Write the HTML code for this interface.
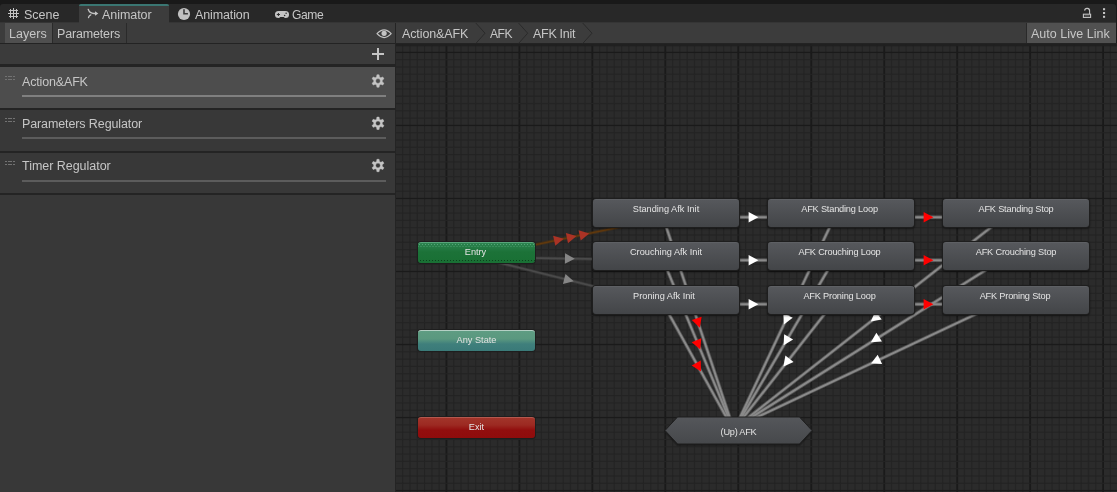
<!DOCTYPE html>
<html><head><meta charset="utf-8"><title>Animator</title>
<style>
html,body{margin:0;padding:0;background:#191919;}
body{width:1117px;height:492px;position:relative;overflow:hidden;font-family:"Liberation Sans",sans-serif;color:#d2d2d2;}
.abs{position:absolute}
.t{position:absolute;line-height:20px;white-space:nowrap;will-change:transform}
#topstrip{left:0;top:0;width:1117px;height:4px;background:#191919}
#tabbar{left:0;top:4px;width:1116px;height:18px;background:#282828;border-radius:3px 3px 0 0}
#acttab{left:79px;top:4px;width:90px;height:19px;background:#3c3c3c;border-top:2px solid #3a7672;box-sizing:border-box;border-radius:2px 2px 0 0}
#toolbar{left:0;top:22px;width:1116px;height:21px;background:#3c3c3c;border-top:1px solid #353535;box-sizing:border-box}
#toolline{left:0;top:43px;width:1117px;height:1px;background:#232323}
#left{left:0;top:44px;width:395px;height:448px;background:#383838}
#plusrow{left:0;top:44px;width:395px;height:20px;background:#3b3b3b}
#vdiv{left:395px;top:23px;width:1px;height:469px;background:#242424}
.layer{position:absolute;left:0;width:395px}
.layer .bar{position:absolute;left:22px;width:364px;height:2px;background:#5c5c5c}
.layer .h1,.layer .h2{position:absolute;left:5px;width:10px;height:1px;background:repeating-linear-gradient(90deg,#727272 0,#727272 2px,transparent 2px,transparent 2.6px)}
.sep{position:absolute;left:0;width:395px;height:2px;background:#242424}
#graph{left:396px;top:44px;width:721px;height:448px;background:#2b2b2b}
.node span,.gs{will-change:transform}
.node{position:absolute;box-sizing:border-box;border-radius:3px;text-align:center;font-size:9.2px;color:#e4e4e4;white-space:nowrap}
.node span{position:absolute;left:0;right:0;top:4px;line-height:11px}
.node.st{background:linear-gradient(#56585c,#434548);box-shadow:0 0 0 1px #1e1e1e,0 1px 2px 1px rgba(0,0,0,.45);border-top:1px solid #5e6064}
.node.entry{background:linear-gradient(90deg,rgba(130,200,165,.5) 1px,transparent 1px) 1px 1px/3px 1px repeat-x,linear-gradient(90deg,rgba(130,200,165,.4) 1px,transparent 1px) 2.5px 3px/3px 1px repeat-x,linear-gradient(90deg,rgba(0,25,8,.55) 1px,transparent 1px) 2px 17px/3px 1px repeat-x,linear-gradient(#2c8450 0%,#1c7238 45%,#197034 100%);box-shadow:0 0 0 1px #1e1e1e;border-top:1px solid #58a47a}
.node.any{background:linear-gradient(#5e9c82 0%,#5a987f 40%,#3f7f7c 65%,#3a7a78 100%);box-shadow:0 0 0 1px #1e1e1e;border-top:1px solid #b4d0c4}
.node.exit{background:linear-gradient(#a2342a 0%,#9c2a22 35%,#920e0e 60%,#900c0c 100%);box-shadow:0 0 0 1px #1e1e1e;border-top:1px solid #b4584e}
</style></head><body>
<div id="topstrip" class="abs"></div>
<div id="tabbar" class="abs"></div>
<div id="toolbar" class="abs"></div>
<div id="acttab" class="abs"></div>
<div class="abs" style="left:5px;top:23px;width:47px;height:20px;background:#4f4f4f"></div>
<div class="abs" style="left:52px;top:23px;width:1px;height:20px;background:#2a2a2a"></div>
<div class="abs" style="left:126px;top:23px;width:1px;height:20px;background:#2a2a2a"></div>
<div class="abs" style="left:1026px;top:23px;width:1px;height:20px;background:#2a2a2a"></div>
<div class="abs" style="left:1027px;top:23px;width:89px;height:20px;background:#515151"></div>
<div id="toolline" class="abs"></div>
<div id="left" class="abs">
  <div class="sep" style="top:20px;height:3px"></div>
  <div class="layer" style="top:23px;height:41px;background:#4d4d4d"><div class="h1" style="top:9px"></div><div class="h2" style="top:12px"></div><div class="bar" style="top:28px;background:#808080"></div></div>
  <div class="sep" style="top:64px"></div>
  <div class="layer" style="top:66px;height:41px"><div class="h1" style="top:8px"></div><div class="h2" style="top:11px"></div><div class="bar" style="top:27px"></div></div>
  <div class="sep" style="top:106.5px"></div>
  <div class="layer" style="top:108.5px;height:40px"><div class="h1" style="top:8px"></div><div class="h2" style="top:11px"></div><div class="bar" style="top:27px"></div></div>
  <div class="sep" style="top:148.5px"></div>
</div>
<div id="plusrow" class="abs"></div>
<div id="vdiv" class="abs"></div>
<div id="graph" class="abs"></div>
<div id="tab_scene" class="t" style="left:24.00px;top:4.67px;font-size:12.5px;letter-spacing:0.0px;color:#c6c6c6">Scene</div><div id="tab_animator" class="t" style="left:102.00px;top:4.67px;font-size:12.5px;letter-spacing:-0.06px;color:#c6c6c6">Animator</div><div id="tab_animation" class="t" style="left:195.00px;top:4.67px;font-size:12.5px;letter-spacing:-0.12px;color:#c6c6c6">Animation</div><div id="tab_game" class="t" style="left:292.00px;top:4.81px;font-size:12.1px;letter-spacing:-0.4px;color:#c6c6c6">Game</div><div id="tb_layers" class="t" style="left:9.00px;top:23.67px;font-size:12.5px;letter-spacing:0.04px;color:#c6c6c6">Layers</div><div id="tb_params" class="t" style="left:57.00px;top:23.67px;font-size:12.5px;letter-spacing:-0.16px;color:#c6c6c6">Parameters</div><div id="bc1" class="t" style="left:402.00px;top:23.67px;font-size:12.5px;letter-spacing:-0.11px;color:#c6c6c6">Action&amp;AFK</div><div id="bc2" class="t" style="left:490.00px;top:23.81px;font-size:12.1px;letter-spacing:-0.5px;color:#c6c6c6">AFK</div><div id="bc3" class="t" style="left:533.00px;top:23.67px;font-size:12.5px;letter-spacing:-0.29px;color:#c6c6c6">AFK Init</div><div id="tb_auto" class="t" style="left:1031.00px;top:23.67px;font-size:12.5px;letter-spacing:0.02px;color:#c6c6c6">Auto Live Link</div><div id="ly1" class="t" style="left:22.00px;top:71.67px;font-size:12.5px;letter-spacing:-0.16px;color:#c6c6c6">Action&amp;AFK</div><div id="ly2" class="t" style="left:22.00px;top:113.67px;font-size:12.5px;letter-spacing:-0.11px;color:#c6c6c6">Parameters Regulator</div><div id="ly3" class="t" style="left:22.00px;top:155.67px;font-size:12.5px;letter-spacing:-0.03px;color:#c6c6c6">Timer Regulator</div>
<svg class="abs" style="left:0;top:0" width="1117" height="492" viewBox="0 0 1117 492">
<defs><linearGradient id="hg" x1="0" y1="0" x2="0" y2="1"><stop offset="0" stop-color="#55575b"/><stop offset="1" stop-color="#46484b"/></linearGradient><clipPath id="gc"><rect x="396" y="44" width="721" height="448"/></clipPath></defs>
<g clip-path="url(#gc)"><rect x="402.12" y="44" width="1.1" height="448" fill="#242424"/><rect x="409.42" y="44" width="1.1" height="448" fill="#242424"/><rect x="416.72" y="44" width="1.1" height="448" fill="#242424"/><rect x="424.01" y="44" width="1.1" height="448" fill="#242424"/><rect x="431.31" y="44" width="1.1" height="448" fill="#242424"/><rect x="438.60" y="44" width="1.1" height="448" fill="#242424"/><rect x="445.55" y="44" width="1.8" height="448" fill="#1a1a1a"/><rect x="453.20" y="44" width="1.1" height="448" fill="#242424"/><rect x="460.49" y="44" width="1.1" height="448" fill="#242424"/><rect x="467.79" y="44" width="1.1" height="448" fill="#242424"/><rect x="475.08" y="44" width="1.1" height="448" fill="#242424"/><rect x="482.38" y="44" width="1.1" height="448" fill="#242424"/><rect x="489.68" y="44" width="1.1" height="448" fill="#242424"/><rect x="496.97" y="44" width="1.1" height="448" fill="#242424"/><rect x="504.27" y="44" width="1.1" height="448" fill="#242424"/><rect x="511.56" y="44" width="1.1" height="448" fill="#242424"/><rect x="518.51" y="44" width="1.8" height="448" fill="#1a1a1a"/><rect x="526.16" y="44" width="1.1" height="448" fill="#242424"/><rect x="533.45" y="44" width="1.1" height="448" fill="#242424"/><rect x="540.75" y="44" width="1.1" height="448" fill="#242424"/><rect x="548.04" y="44" width="1.1" height="448" fill="#242424"/><rect x="555.34" y="44" width="1.1" height="448" fill="#242424"/><rect x="562.64" y="44" width="1.1" height="448" fill="#242424"/><rect x="569.93" y="44" width="1.1" height="448" fill="#242424"/><rect x="577.23" y="44" width="1.1" height="448" fill="#242424"/><rect x="584.52" y="44" width="1.1" height="448" fill="#242424"/><rect x="591.47" y="44" width="1.8" height="448" fill="#1a1a1a"/><rect x="599.12" y="44" width="1.1" height="448" fill="#242424"/><rect x="606.41" y="44" width="1.1" height="448" fill="#242424"/><rect x="613.71" y="44" width="1.1" height="448" fill="#242424"/><rect x="621.00" y="44" width="1.1" height="448" fill="#242424"/><rect x="628.30" y="44" width="1.1" height="448" fill="#242424"/><rect x="635.60" y="44" width="1.1" height="448" fill="#242424"/><rect x="642.89" y="44" width="1.1" height="448" fill="#242424"/><rect x="650.19" y="44" width="1.1" height="448" fill="#242424"/><rect x="657.48" y="44" width="1.1" height="448" fill="#242424"/><rect x="664.43" y="44" width="1.8" height="448" fill="#1a1a1a"/><rect x="672.08" y="44" width="1.1" height="448" fill="#242424"/><rect x="679.37" y="44" width="1.1" height="448" fill="#242424"/><rect x="686.67" y="44" width="1.1" height="448" fill="#242424"/><rect x="693.96" y="44" width="1.1" height="448" fill="#242424"/><rect x="701.26" y="44" width="1.1" height="448" fill="#242424"/><rect x="708.56" y="44" width="1.1" height="448" fill="#242424"/><rect x="715.85" y="44" width="1.1" height="448" fill="#242424"/><rect x="723.15" y="44" width="1.1" height="448" fill="#242424"/><rect x="730.44" y="44" width="1.1" height="448" fill="#242424"/><rect x="737.39" y="44" width="1.8" height="448" fill="#1a1a1a"/><rect x="745.04" y="44" width="1.1" height="448" fill="#242424"/><rect x="752.33" y="44" width="1.1" height="448" fill="#242424"/><rect x="759.63" y="44" width="1.1" height="448" fill="#242424"/><rect x="766.92" y="44" width="1.1" height="448" fill="#242424"/><rect x="774.22" y="44" width="1.1" height="448" fill="#242424"/><rect x="781.52" y="44" width="1.1" height="448" fill="#242424"/><rect x="788.81" y="44" width="1.1" height="448" fill="#242424"/><rect x="796.11" y="44" width="1.1" height="448" fill="#242424"/><rect x="803.40" y="44" width="1.1" height="448" fill="#242424"/><rect x="810.35" y="44" width="1.8" height="448" fill="#1a1a1a"/><rect x="818.00" y="44" width="1.1" height="448" fill="#242424"/><rect x="825.29" y="44" width="1.1" height="448" fill="#242424"/><rect x="832.59" y="44" width="1.1" height="448" fill="#242424"/><rect x="839.88" y="44" width="1.1" height="448" fill="#242424"/><rect x="847.18" y="44" width="1.1" height="448" fill="#242424"/><rect x="854.48" y="44" width="1.1" height="448" fill="#242424"/><rect x="861.77" y="44" width="1.1" height="448" fill="#242424"/><rect x="869.07" y="44" width="1.1" height="448" fill="#242424"/><rect x="876.36" y="44" width="1.1" height="448" fill="#242424"/><rect x="883.31" y="44" width="1.8" height="448" fill="#1a1a1a"/><rect x="890.96" y="44" width="1.1" height="448" fill="#242424"/><rect x="898.25" y="44" width="1.1" height="448" fill="#242424"/><rect x="905.55" y="44" width="1.1" height="448" fill="#242424"/><rect x="912.84" y="44" width="1.1" height="448" fill="#242424"/><rect x="920.14" y="44" width="1.1" height="448" fill="#242424"/><rect x="927.44" y="44" width="1.1" height="448" fill="#242424"/><rect x="934.73" y="44" width="1.1" height="448" fill="#242424"/><rect x="942.03" y="44" width="1.1" height="448" fill="#242424"/><rect x="949.32" y="44" width="1.1" height="448" fill="#242424"/><rect x="956.27" y="44" width="1.8" height="448" fill="#1a1a1a"/><rect x="963.92" y="44" width="1.1" height="448" fill="#242424"/><rect x="971.21" y="44" width="1.1" height="448" fill="#242424"/><rect x="978.51" y="44" width="1.1" height="448" fill="#242424"/><rect x="985.80" y="44" width="1.1" height="448" fill="#242424"/><rect x="993.10" y="44" width="1.1" height="448" fill="#242424"/><rect x="1000.40" y="44" width="1.1" height="448" fill="#242424"/><rect x="1007.69" y="44" width="1.1" height="448" fill="#242424"/><rect x="1014.99" y="44" width="1.1" height="448" fill="#242424"/><rect x="1022.28" y="44" width="1.1" height="448" fill="#242424"/><rect x="1029.23" y="44" width="1.8" height="448" fill="#1a1a1a"/><rect x="1036.88" y="44" width="1.1" height="448" fill="#242424"/><rect x="1044.17" y="44" width="1.1" height="448" fill="#242424"/><rect x="1051.47" y="44" width="1.1" height="448" fill="#242424"/><rect x="1058.76" y="44" width="1.1" height="448" fill="#242424"/><rect x="1066.06" y="44" width="1.1" height="448" fill="#242424"/><rect x="1073.36" y="44" width="1.1" height="448" fill="#242424"/><rect x="1080.65" y="44" width="1.1" height="448" fill="#242424"/><rect x="1087.95" y="44" width="1.1" height="448" fill="#242424"/><rect x="1095.24" y="44" width="1.1" height="448" fill="#242424"/><rect x="1102.19" y="44" width="1.8" height="448" fill="#1a1a1a"/><rect x="1109.84" y="44" width="1.1" height="448" fill="#242424"/><rect x="396" y="44.55" width="721" height="1.1" fill="#242424"/><rect x="396" y="51.77" width="721" height="1.25" fill="#1a1a1a"/><rect x="396" y="59.15" width="721" height="1.1" fill="#242424"/><rect x="396" y="66.46" width="721" height="1.1" fill="#242424"/><rect x="396" y="73.76" width="721" height="1.1" fill="#242424"/><rect x="396" y="81.06" width="721" height="1.1" fill="#242424"/><rect x="396" y="88.36" width="721" height="1.1" fill="#242424"/><rect x="396" y="95.67" width="721" height="1.1" fill="#242424"/><rect x="396" y="102.97" width="721" height="1.1" fill="#242424"/><rect x="396" y="110.27" width="721" height="1.1" fill="#242424"/><rect x="396" y="117.58" width="721" height="1.1" fill="#242424"/><rect x="396" y="124.81" width="721" height="1.25" fill="#1a1a1a"/><rect x="396" y="132.18" width="721" height="1.1" fill="#242424"/><rect x="396" y="139.49" width="721" height="1.1" fill="#242424"/><rect x="396" y="146.79" width="721" height="1.1" fill="#242424"/><rect x="396" y="154.09" width="721" height="1.1" fill="#242424"/><rect x="396" y="161.39" width="721" height="1.1" fill="#242424"/><rect x="396" y="168.70" width="721" height="1.1" fill="#242424"/><rect x="396" y="176.00" width="721" height="1.1" fill="#242424"/><rect x="396" y="183.30" width="721" height="1.1" fill="#242424"/><rect x="396" y="190.61" width="721" height="1.1" fill="#242424"/><rect x="396" y="197.84" width="721" height="1.25" fill="#1a1a1a"/><rect x="396" y="205.21" width="721" height="1.1" fill="#242424"/><rect x="396" y="212.52" width="721" height="1.1" fill="#242424"/><rect x="396" y="219.82" width="721" height="1.1" fill="#242424"/><rect x="396" y="227.12" width="721" height="1.1" fill="#242424"/><rect x="396" y="234.42" width="721" height="1.1" fill="#242424"/><rect x="396" y="241.73" width="721" height="1.1" fill="#242424"/><rect x="396" y="249.03" width="721" height="1.1" fill="#242424"/><rect x="396" y="256.33" width="721" height="1.1" fill="#242424"/><rect x="396" y="263.64" width="721" height="1.1" fill="#242424"/><rect x="396" y="270.87" width="721" height="1.25" fill="#1a1a1a"/><rect x="396" y="278.24" width="721" height="1.1" fill="#242424"/><rect x="396" y="285.55" width="721" height="1.1" fill="#242424"/><rect x="396" y="292.85" width="721" height="1.1" fill="#242424"/><rect x="396" y="300.15" width="721" height="1.1" fill="#242424"/><rect x="396" y="307.45" width="721" height="1.1" fill="#242424"/><rect x="396" y="314.76" width="721" height="1.1" fill="#242424"/><rect x="396" y="322.06" width="721" height="1.1" fill="#242424"/><rect x="396" y="329.36" width="721" height="1.1" fill="#242424"/><rect x="396" y="336.67" width="721" height="1.1" fill="#242424"/><rect x="396" y="343.89" width="721" height="1.25" fill="#1a1a1a"/><rect x="396" y="351.27" width="721" height="1.1" fill="#242424"/><rect x="396" y="358.58" width="721" height="1.1" fill="#242424"/><rect x="396" y="365.88" width="721" height="1.1" fill="#242424"/><rect x="396" y="373.18" width="721" height="1.1" fill="#242424"/><rect x="396" y="380.48" width="721" height="1.1" fill="#242424"/><rect x="396" y="387.79" width="721" height="1.1" fill="#242424"/><rect x="396" y="395.09" width="721" height="1.1" fill="#242424"/><rect x="396" y="402.39" width="721" height="1.1" fill="#242424"/><rect x="396" y="409.70" width="721" height="1.1" fill="#242424"/><rect x="396" y="416.92" width="721" height="1.25" fill="#1a1a1a"/><rect x="396" y="424.30" width="721" height="1.1" fill="#242424"/><rect x="396" y="431.61" width="721" height="1.1" fill="#242424"/><rect x="396" y="438.91" width="721" height="1.1" fill="#242424"/><rect x="396" y="446.21" width="721" height="1.1" fill="#242424"/><rect x="396" y="453.51" width="721" height="1.1" fill="#242424"/><rect x="396" y="460.82" width="721" height="1.1" fill="#242424"/><rect x="396" y="468.12" width="721" height="1.1" fill="#242424"/><rect x="396" y="475.42" width="721" height="1.1" fill="#242424"/><rect x="396" y="482.73" width="721" height="1.1" fill="#242424"/><rect x="396" y="489.95" width="721" height="1.25" fill="#1a1a1a"/><rect x="396" y="44" width="721" height="2.4" fill="#1f1f1f" opacity="0.8"/></g>
<g clip-path="url(#gc)"><line x1="477.36" y1="256.91" x2="666.86" y2="217.11" stroke="#62390c" stroke-opacity="0.42" stroke-width="3.1999999999999997"/><line x1="477.36" y1="256.91" x2="666.86" y2="217.11" stroke="#62390c" stroke-width="1.4999999999999998"/><line x1="476.43" y1="257.00" x2="665.93" y2="260.20" stroke="#4a4a4a" stroke-opacity="0.42" stroke-width="3.4"/><line x1="476.43" y1="257.00" x2="665.93" y2="260.20" stroke="#4a4a4a" stroke-width="1.7"/><line x1="475.48" y1="256.88" x2="664.98" y2="304.08" stroke="#4a4a4a" stroke-opacity="0.42" stroke-width="3.4"/><line x1="475.48" y1="256.88" x2="664.98" y2="304.08" stroke="#4a4a4a" stroke-width="1.7"/><line x1="666.00" y1="217.20" x2="841.00" y2="217.20" stroke="#8a8a8a" stroke-opacity="0.42" stroke-width="3.6999999999999997"/><line x1="666.00" y1="217.20" x2="841.00" y2="217.20" stroke="#8a8a8a" stroke-width="1.9999999999999998"/><line x1="841.00" y1="217.20" x2="1016.00" y2="217.20" stroke="#8a8a8a" stroke-opacity="0.42" stroke-width="3.6999999999999997"/><line x1="841.00" y1="217.20" x2="1016.00" y2="217.20" stroke="#8a8a8a" stroke-width="1.9999999999999998"/><line x1="662.02" y1="214.33" x2="734.52" y2="431.83" stroke="#8a8a8a" stroke-opacity="0.42" stroke-width="3.6999999999999997"/><line x1="662.02" y1="214.33" x2="734.52" y2="431.83" stroke="#8a8a8a" stroke-width="1.9999999999999998"/><line x1="837.20" y1="211.21" x2="734.70" y2="428.71" stroke="#8a8a8a" stroke-opacity="0.42" stroke-width="3.6999999999999997"/><line x1="837.20" y1="211.21" x2="734.70" y2="428.71" stroke="#8a8a8a" stroke-width="1.9999999999999998"/><line x1="1013.41" y1="209.69" x2="735.91" y2="427.19" stroke="#8a8a8a" stroke-opacity="0.42" stroke-width="3.6999999999999997"/><line x1="1013.41" y1="209.69" x2="735.91" y2="427.19" stroke="#8a8a8a" stroke-width="1.9999999999999998"/><line x1="666.00" y1="260.20" x2="841.00" y2="260.20" stroke="#8a8a8a" stroke-opacity="0.42" stroke-width="3.6999999999999997"/><line x1="666.00" y1="260.20" x2="841.00" y2="260.20" stroke="#8a8a8a" stroke-width="1.9999999999999998"/><line x1="841.00" y1="260.20" x2="1016.00" y2="260.20" stroke="#8a8a8a" stroke-opacity="0.42" stroke-width="3.6999999999999997"/><line x1="841.00" y1="260.20" x2="1016.00" y2="260.20" stroke="#8a8a8a" stroke-width="1.9999999999999998"/><line x1="662.12" y1="257.61" x2="734.62" y2="432.11" stroke="#8a8a8a" stroke-opacity="0.42" stroke-width="3.6999999999999997"/><line x1="662.12" y1="257.61" x2="734.62" y2="432.11" stroke="#8a8a8a" stroke-width="1.9999999999999998"/><line x1="837.38" y1="253.87" x2="734.88" y2="428.37" stroke="#8a8a8a" stroke-opacity="0.42" stroke-width="3.6999999999999997"/><line x1="837.38" y1="253.87" x2="734.88" y2="428.37" stroke="#8a8a8a" stroke-width="1.9999999999999998"/><line x1="1013.76" y1="252.44" x2="736.26" y2="426.94" stroke="#8a8a8a" stroke-opacity="0.42" stroke-width="3.6999999999999997"/><line x1="1013.76" y1="252.44" x2="736.26" y2="426.94" stroke="#8a8a8a" stroke-width="1.9999999999999998"/><line x1="666.00" y1="304.20" x2="841.00" y2="304.20" stroke="#8a8a8a" stroke-opacity="0.42" stroke-width="3.6999999999999997"/><line x1="666.00" y1="304.20" x2="841.00" y2="304.20" stroke="#8a8a8a" stroke-width="1.9999999999999998"/><line x1="841.00" y1="304.20" x2="1016.00" y2="304.20" stroke="#8a8a8a" stroke-opacity="0.42" stroke-width="3.6999999999999997"/><line x1="841.00" y1="304.20" x2="1016.00" y2="304.20" stroke="#8a8a8a" stroke-width="1.9999999999999998"/><line x1="662.33" y1="302.04" x2="734.83" y2="432.54" stroke="#8a8a8a" stroke-opacity="0.42" stroke-width="3.6999999999999997"/><line x1="662.33" y1="302.04" x2="734.83" y2="432.54" stroke="#8a8a8a" stroke-width="1.9999999999999998"/><line x1="837.70" y1="297.41" x2="735.20" y2="427.91" stroke="#8a8a8a" stroke-opacity="0.42" stroke-width="3.6999999999999997"/><line x1="837.70" y1="297.41" x2="735.20" y2="427.91" stroke="#8a8a8a" stroke-width="1.9999999999999998"/><line x1="1014.21" y1="296.20" x2="736.71" y2="426.70" stroke="#8a8a8a" stroke-opacity="0.42" stroke-width="3.6999999999999997"/><line x1="1014.21" y1="296.20" x2="736.71" y2="426.70" stroke="#8a8a8a" stroke-width="1.9999999999999998"/><polygon points="563.79,238.76 555.27,245.86 553.14,235.68" fill="#aa3325"/><polygon points="576.52,236.09 568.00,243.19 565.86,233.01" fill="#aa3325"/><polygon points="589.24,233.41 580.72,240.52 578.58,230.34" fill="#aa3325"/><polygon points="574.78,258.66 564.89,263.69 565.07,253.30" fill="#868686"/><polygon points="573.73,281.35 562.96,284.02 565.48,273.93" fill="#868686"/><polygon points="758.40,217.20 748.60,222.40 748.60,212.00" fill="#ffffff"/><polygon points="933.40,217.20 923.60,222.40 923.60,212.00" fill="#ff0000"/><polygon points="699.82,327.73 691.78,320.07 701.65,316.79" fill="#ff0000"/><polygon points="783.86,324.39 783.34,313.31 792.74,317.74" fill="#ffffff"/><polygon points="870.80,321.47 875.31,311.33 881.72,319.51" fill="#ffffff"/><polygon points="758.40,260.20 748.60,265.40 748.60,255.00" fill="#ffffff"/><polygon points="933.40,260.20 923.60,265.40 923.60,255.00" fill="#ff0000"/><polygon points="700.25,349.39 691.69,342.33 701.29,338.34" fill="#ff0000"/><polygon points="783.65,345.35 784.13,334.26 793.09,339.53" fill="#ffffff"/><polygon points="870.87,342.30 876.39,332.68 881.93,341.49" fill="#ffffff"/><polygon points="758.40,304.20 748.60,309.40 748.60,299.00" fill="#ffffff"/><polygon points="933.40,304.20 923.60,309.40 923.60,299.00" fill="#ff0000"/><polygon points="700.96,371.57 691.65,365.53 700.74,360.48" fill="#ff0000"/><polygon points="783.42,366.51 785.38,355.59 793.56,362.01" fill="#ffffff"/><polygon points="871.03,363.53 877.68,354.66 882.11,364.07" fill="#ffffff"/>
<polygon points="677.5,417 799.5,417 812,430.5 799.5,444 677.5,444 665,430.5" transform="translate(0,1.2)" fill="#161616" opacity="0.7" stroke="#161616" stroke-width="2" stroke-opacity="0.5"/><polygon points="677.5,417 799.5,417 812,430.5 799.5,444 677.5,444 665,430.5" fill="url(#hg)" stroke="#1e1e1e" stroke-width="1"/>
</g>

<g fill="#c4c4c4" shape-rendering="crispEdges">
<rect x="10" y="9" width="1" height="9"/><rect x="13" y="8" width="1" height="11"/><rect x="16" y="9" width="1" height="9"/>
<rect x="9" y="10" width="9" height="1"/><rect x="8" y="13" width="11" height="1"/><rect x="9" y="16" width="9" height="1"/>
</g>
<g fill="none" stroke="#c4c4c4" stroke-width="1.3" stroke-linecap="round">
<path d="M88.2,9.3 C89.2,12.2 91,13.5 94,13.5 L96,13.5"/>
<path d="M88.5,17.5 C88.8,16.2 89.6,15.2 90.8,14.8"/>
</g>
<polygon points="95,11.3 98.3,13.5 95,15.8" fill="#c4c4c4"/>
<circle cx="184" cy="14" r="6.1" fill="#c0c0c0"/>
<path d="M183.2,9.3h1.6v3.8h3.1v1.5h-4.7z" fill="#3a3a3a"/>
<path d="M278.5,11h7a3.5,3.5 0 0 1 0,7.1h-0.6l-1.2,-1.1h-3.4l-1.2,1.1h-0.6a3.5,3.5 0 0 1 0,-7.1z" fill="#c4c4c4"/>
<path d="M277.9,12.9h1v1.1h1.1v1h-1.1v1.1h-1v-1.1h-1.1v-1h1.1z" fill="#2c2c2c"/>
<circle cx="286.1" cy="13.2" r="0.75" fill="#2c2c2c"/><circle cx="284.6" cy="15.6" r="0.75" fill="#2c2c2c"/>
<path d="M377,33.7 Q384.1,25.9 391.2,33.7 Q384.1,41.5 377,33.7Z" fill="none" stroke="#c4c4c4" stroke-width="1.15" stroke-linejoin="round"/>
<circle cx="384.1" cy="33.3" r="2.6" fill="#c4c4c4"/>
<rect x="372" y="53" width="12" height="2" fill="#c4c4c4"/><rect x="377" y="48" width="2" height="12" fill="#c4c4c4"/>
<path d="M376.60,76.93 L376.91,74.80 L379.09,74.80 L379.40,76.93 L380.82,77.75 L382.83,76.95 L383.92,78.85 L382.22,80.18 L382.22,81.82 L383.92,83.15 L382.83,85.05 L380.82,84.25 L379.40,85.07 L379.09,87.20 L376.91,87.20 L376.60,85.07 L375.18,84.25 L373.17,85.05 L372.08,83.15 L373.78,81.82 L373.78,80.18 L372.08,78.85 L373.17,76.95 L375.18,77.75Z M380.40,81.00a2.4,2.4 0 1,0 -4.8,0a2.4,2.4 0 1,0 4.8,0Z" fill="#c4c4c4" fill-rule="evenodd" stroke="#c4c4c4" stroke-width="0.5" stroke-linejoin="round"/><path d="M376.60,119.23 L376.91,117.10 L379.09,117.10 L379.40,119.23 L380.82,120.05 L382.83,119.25 L383.92,121.15 L382.22,122.48 L382.22,124.12 L383.92,125.45 L382.83,127.35 L380.82,126.55 L379.40,127.37 L379.09,129.50 L376.91,129.50 L376.60,127.37 L375.18,126.55 L373.17,127.35 L372.08,125.45 L373.78,124.12 L373.78,122.48 L372.08,121.15 L373.17,119.25 L375.18,120.05Z M380.40,123.30a2.4,2.4 0 1,0 -4.8,0a2.4,2.4 0 1,0 4.8,0Z" fill="#c4c4c4" fill-rule="evenodd" stroke="#c4c4c4" stroke-width="0.5" stroke-linejoin="round"/><path d="M376.60,161.43 L376.91,159.30 L379.09,159.30 L379.40,161.43 L380.82,162.25 L382.83,161.45 L383.92,163.35 L382.22,164.68 L382.22,166.32 L383.92,167.65 L382.83,169.55 L380.82,168.75 L379.40,169.57 L379.09,171.70 L376.91,171.70 L376.60,169.57 L375.18,168.75 L373.17,169.55 L372.08,167.65 L373.78,166.32 L373.78,164.68 L372.08,163.35 L373.17,161.45 L375.18,162.25Z M380.40,165.50a2.4,2.4 0 1,0 -4.8,0a2.4,2.4 0 1,0 4.8,0Z" fill="#c4c4c4" fill-rule="evenodd" stroke="#c4c4c4" stroke-width="0.5" stroke-linejoin="round"/>
<rect x="1083.4" y="14.2" width="7.2" height="3.2" fill="none" stroke="#c4c4c4" stroke-width="1.1"/><rect x="1084.5" y="15.4" width="5" height="0.8" fill="#c4c4c4" opacity="0.45"/>
<path d="M1089.6,14 V11.2 a2.5,2.5 0 0 0 -5,-0.6" fill="none" stroke="#c4c4c4" stroke-width="1.1"/>
<rect x="1103" y="8.2" width="2.1" height="2" fill="#c4c4c4"/><rect x="1103" y="12" width="2.1" height="2" fill="#c4c4c4"/><rect x="1103" y="15.8" width="2.1" height="2" fill="#c4c4c4"/>
<g fill="none" stroke="#2a2a2a" stroke-width="1">
<path d="M475.8,23 L485,33.2 L475.8,43.5"/><path d="M518.5,23 L527.7,33.2 L518.5,43.5"/><path d="M582.7,23 L592,33.2 L582.7,43.5"/>
</g>

</svg>
<div class="node st" style="left:593px;top:199px;width:146px;height:28px"><span style="">Standing Afk Init</span></div><div class="node st" style="left:593px;top:242px;width:146px;height:28px"><span style="">Crouching Afk Init</span></div><div class="node st" style="left:593px;top:286px;width:146px;height:28px"><span style=";left:-4px">Proning Afk Init</span></div><div class="node st" style="left:768px;top:199px;width:146px;height:28px"><span style="letter-spacing:-0.18px;left:-3px">AFK Standing Loop</span></div><div class="node st" style="left:768px;top:242px;width:146px;height:28px"><span style="letter-spacing:-0.18px;left:-3px">AFK Crouching Loop</span></div><div class="node st" style="left:768px;top:286px;width:146px;height:28px"><span style="letter-spacing:-0.18px;left:-3px">AFK Proning Loop</span></div><div class="node st" style="left:943px;top:199px;width:146px;height:28px"><span style="letter-spacing:-0.18px">AFK Standing Stop</span></div><div class="node st" style="left:943px;top:242px;width:146px;height:28px"><span style="letter-spacing:-0.18px">AFK Crouching Stop</span></div><div class="node st" style="left:943px;top:286px;width:146px;height:28px"><span style="letter-spacing:-0.18px;left:-2px">AFK Proning Stop</span></div><div class="node entry" style="left:418px;top:242px;width:117px;height:21px"><span style="left:-2px">Entry</span></div><div class="node any" style="left:418px;top:330px;width:117px;height:21px"><span>Any State</span></div><div class="node exit" style="left:418px;top:417px;width:117px;height:21px"><span>Exit</span></div>
<div class="abs gs" style="left:664.5px;top:427px;width:147px;text-align:center;font-size:9.2px;line-height:11px;letter-spacing:-0.25px;color:#e4e4e4">(Up) AFK</div>
</body></html>
